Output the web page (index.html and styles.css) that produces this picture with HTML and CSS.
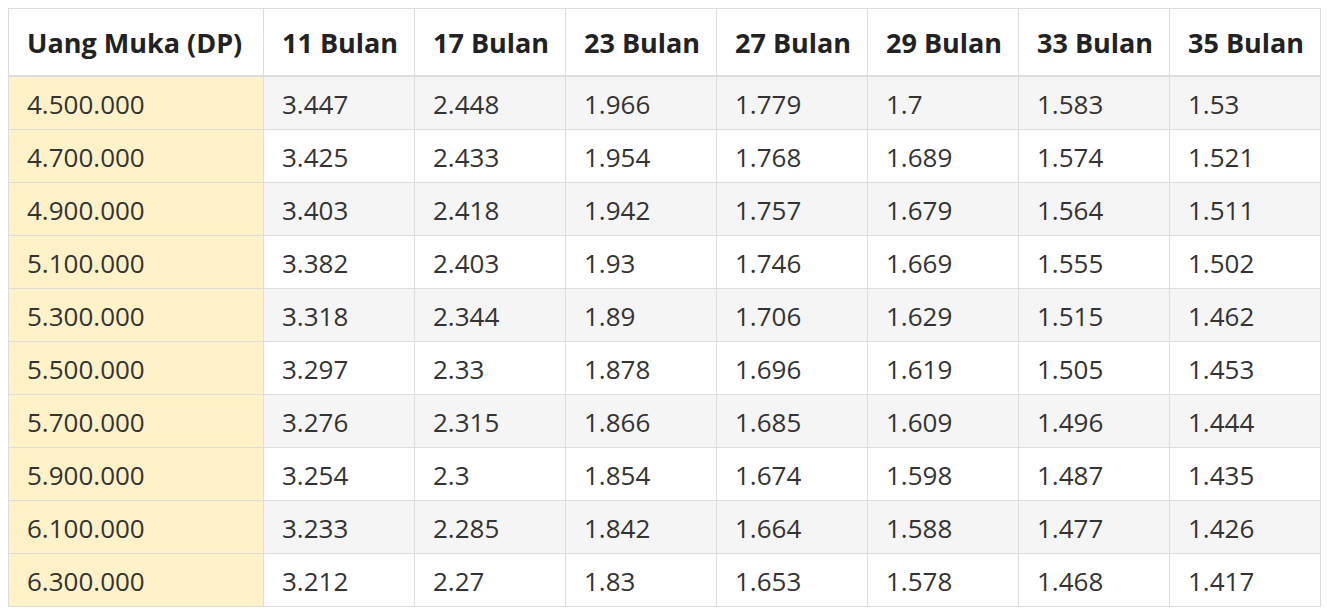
FILE: index.html
```html
<!DOCTYPE html>
<html>
<head>
<meta charset="utf-8">
<link rel="stylesheet" href="styles.css">
</head>
<body>
<table class="cicilan">
<thead>
<tr><th class="dp">Uang Muka (DP)</th><th>11 Bulan</th><th>17 Bulan</th><th>23 Bulan</th><th>27 Bulan</th><th>29 Bulan</th><th>33 Bulan</th><th>35 Bulan</th></tr>
</thead>
<tbody>
<tr><td class="dp">4.500.000</td><td>3.447</td><td>2.448</td><td>1.966</td><td>1.779</td><td>1.7</td><td>1.583</td><td>1.53</td></tr>
<tr><td class="dp">4.700.000</td><td>3.425</td><td>2.433</td><td>1.954</td><td>1.768</td><td>1.689</td><td>1.574</td><td>1.521</td></tr>
<tr><td class="dp">4.900.000</td><td>3.403</td><td>2.418</td><td>1.942</td><td>1.757</td><td>1.679</td><td>1.564</td><td>1.511</td></tr>
<tr><td class="dp">5.100.000</td><td>3.382</td><td>2.403</td><td>1.93</td><td>1.746</td><td>1.669</td><td>1.555</td><td>1.502</td></tr>
<tr><td class="dp">5.300.000</td><td>3.318</td><td>2.344</td><td>1.89</td><td>1.706</td><td>1.629</td><td>1.515</td><td>1.462</td></tr>
<tr><td class="dp">5.500.000</td><td>3.297</td><td>2.33</td><td>1.878</td><td>1.696</td><td>1.619</td><td>1.505</td><td>1.453</td></tr>
<tr><td class="dp">5.700.000</td><td>3.276</td><td>2.315</td><td>1.866</td><td>1.685</td><td>1.609</td><td>1.496</td><td>1.444</td></tr>
<tr><td class="dp">5.900.000</td><td>3.254</td><td>2.3</td><td>1.854</td><td>1.674</td><td>1.598</td><td>1.487</td><td>1.435</td></tr>
<tr><td class="dp">6.100.000</td><td>3.233</td><td>2.285</td><td>1.842</td><td>1.664</td><td>1.588</td><td>1.477</td><td>1.426</td></tr>
<tr><td class="dp">6.300.000</td><td>3.212</td><td>2.27</td><td>1.83</td><td>1.653</td><td>1.578</td><td>1.468</td><td>1.417</td></tr>
</tbody>
</table>
</body>
</html>
```

FILE: styles.css
```css
html, body {
  margin: 0;
  padding: 0;
  background: #fff;
}
body {
  padding: 8px;
  font-family: "Open Sans", "Noto Sans", sans-serif;
  font-size: 26px;
  color: #333;
}
.cicilan {
  border-collapse: collapse;
  table-layout: fixed;
  width: 1313px;
  border: 1px solid #ddd;
}
.cicilan th, .cicilan td {
  border: 1px solid #ddd;
  padding: 0 0 0 18px;
  text-align: left;
  white-space: nowrap;
  overflow: hidden;
  line-height: 1;
}
.cicilan th {
  height: 65px;
  padding-top: 1px;
  font-size: 27px;
  font-weight: 700;
  color: #222;
  border-bottom: 2px solid #ddd;
  border-top: 1px solid #ddd;
  background: #fff;
}
.cicilan th.dp {
  width: 236px;
}
.cicilan td {
  height: 51px;
  padding-top: 1px;
}
.cicilan tbody tr:nth-child(odd) td {
  background: #f5f5f5;
}
.cicilan td.dp, .cicilan tbody tr:nth-child(odd) td.dp {
  background: #fff2c9;
}
```
